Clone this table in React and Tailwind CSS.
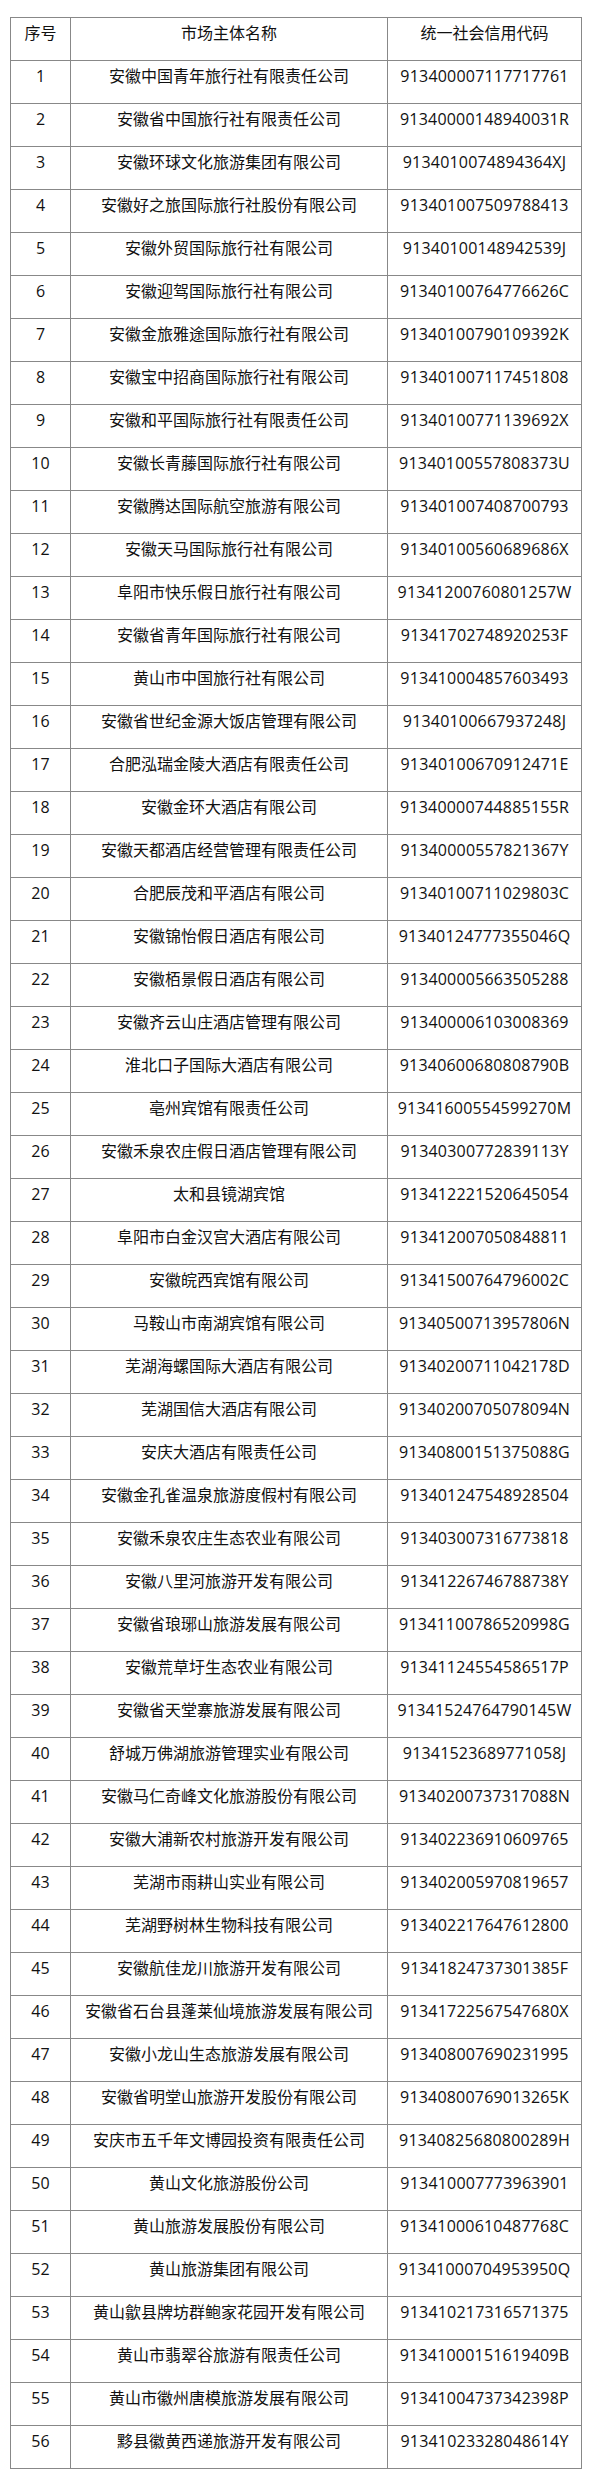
const rows = [
  ["安徽中国青年旅行社有限责任公司", "913400007117717761"],
  ["安徽省中国旅行社有限责任公司", "91340000148940031R"],
  ["安徽环球文化旅游集团有限公司", "9134010074894364XJ"],
  ["安徽好之旅国际旅行社股份有限公司", "913401007509788413"],
  ["安徽外贸国际旅行社有限公司", "91340100148942539J"],
  ["安徽迎驾国际旅行社有限公司", "91340100764776626C"],
  ["安徽金旅雅途国际旅行社有限公司", "91340100790109392K"],
  ["安徽宝中招商国际旅行社有限公司", "913401007117451808"],
  ["安徽和平国际旅行社有限责任公司", "91340100771139692X"],
  ["安徽长青藤国际旅行社有限公司", "91340100557808373U"],
  ["安徽腾达国际航空旅游有限公司", "913401007408700793"],
  ["安徽天马国际旅行社有限公司", "91340100560689686X"],
  ["阜阳市快乐假日旅行社有限公司", "91341200760801257W"],
  ["安徽省青年国际旅行社有限公司", "91341702748920253F"],
  ["黄山市中国旅行社有限公司", "913410004857603493"],
  ["安徽省世纪金源大饭店管理有限公司", "91340100667937248J"],
  ["合肥泓瑞金陵大酒店有限责任公司", "91340100670912471E"],
  ["安徽金环大酒店有限公司", "91340000744885155R"],
  ["安徽天都酒店经营管理有限责任公司", "91340000557821367Y"],
  ["合肥辰茂和平酒店有限公司", "91340100711029803C"],
  ["安徽锦怡假日酒店有限公司", "91340124777355046Q"],
  ["安徽栢景假日酒店有限公司", "913400005663505288"],
  ["安徽齐云山庄酒店管理有限公司", "913400006103008369"],
  ["淮北口子国际大酒店有限公司", "91340600680808790B"],
  ["亳州宾馆有限责任公司", "91341600554599270M"],
  ["安徽禾泉农庄假日酒店管理有限公司", "91340300772839113Y"],
  ["太和县镜湖宾馆", "913412221520645054"],
  ["阜阳市白金汉宫大酒店有限公司", "913412007050848811"],
  ["安徽皖西宾馆有限公司", "91341500764796002C"],
  ["马鞍山市南湖宾馆有限公司", "91340500713957806N"],
  ["芜湖海螺国际大酒店有限公司", "91340200711042178D"],
  ["芜湖国信大酒店有限公司", "91340200705078094N"],
  ["安庆大酒店有限责任公司", "91340800151375088G"],
  ["安徽金孔雀温泉旅游度假村有限公司", "913401247548928504"],
  ["安徽禾泉农庄生态农业有限公司", "913403007316773818"],
  ["安徽八里河旅游开发有限公司", "91341226746788738Y"],
  ["安徽省琅琊山旅游发展有限公司", "91341100786520998G"],
  ["安徽荒草圩生态农业有限公司", "91341124554586517P"],
  ["安徽省天堂寨旅游发展有限公司", "91341524764790145W"],
  ["舒城万佛湖旅游管理实业有限公司", "91341523689771058J"],
  ["安徽马仁奇峰文化旅游股份有限公司", "91340200737317088N"],
  ["安徽大浦新农村旅游开发有限公司", "913402236910609765"],
  ["芜湖市雨耕山实业有限公司", "913402005970819657"],
  ["芜湖野树林生物科技有限公司", "913402217647612800"],
  ["安徽航佳龙川旅游开发有限公司", "91341824737301385F"],
  ["安徽省石台县蓬莱仙境旅游发展有限公司", "91341722567547680X"],
  ["安徽小龙山生态旅游发展有限公司", "913408007690231995"],
  ["安徽省明堂山旅游开发股份有限公司", "91340800769013265K"],
  ["安庆市五千年文博园投资有限责任公司", "91340825680800289H"],
  ["黄山文化旅游股份公司", "913410007773963901"],
  ["黄山旅游发展股份有限公司", "91341000610487768C"],
  ["黄山旅游集团有限公司", "91341000704953950Q"],
  ["黄山歙县牌坊群鲍家花园开发有限公司", "913410217316571375"],
  ["黄山市翡翠谷旅游有限责任公司", "91341000151619409B"],
  ["黄山市徽州唐模旅游发展有限公司", "91341004737342398P"],
  ["黟县徽黄西递旅游开发有限公司", "91341023328048614Y"],
];

const cell =
  "h-[43px] border-r border-b border-[#888] pt-[4px] text-center leading-[22px] whitespace-nowrap overflow-hidden";

export default function App() {
  return (
    <div
      className="bg-white text-[16px] text-[#111] pt-[17px] pb-[17px] pl-[10px]"
      style={{ fontFamily: '"Open Sans", "Noto Sans CJK SC", sans-serif' }}
    >
      <div className="w-[572px] grid grid-cols-[60px_317px_194px] border-l border-t border-[#888]">
        <div className={cell}>序号</div>
        <div className={cell}>市场主体名称</div>
        <div className={cell}>统一社会信用代码</div>
        {rows.map(([name, code], i) => (
          <Row key={i} n={i + 1} name={name} code={code} />
        ))}
      </div>
    </div>
  );
}

function Row({ n, name, code }) {
  return (
    <>
      <div className={cell}>{n}</div>
      <div className={cell}>{name}</div>
      <div className={cell + " tracking-[0.2px]"}>{code}</div>
    </>
  );
}
